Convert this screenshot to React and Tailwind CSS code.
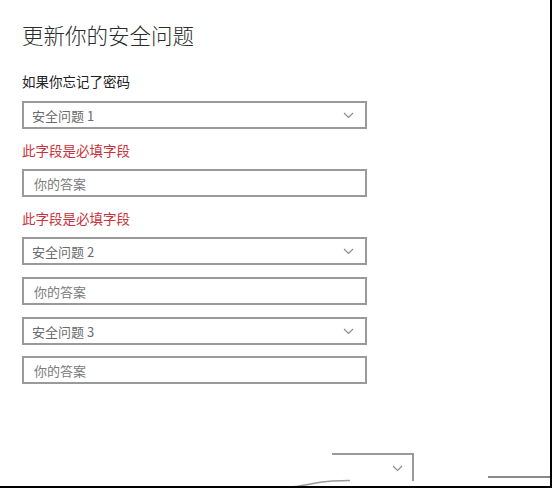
import React from "react";

const font = { fontFamily: '"Noto Sans CJK SC", "Noto Sans", sans-serif' };

function Chevron() {
  return (
    <svg width="11" height="7" viewBox="0 0 11 7" className="shrink-0">
      <path d="M1 1 L5.5 5.5 L10 1" fill="none" stroke="#8a8a8a" strokeWidth="1.1" />
    </svg>
  );
}

function Select({ label, className = "" }) {
  return (
    <div
      className={`flex items-center justify-between w-[345px] h-[28px] border-2 border-[#9a9a9a] bg-white pl-[8px] pr-[11px] ${className}`}
    >
      <span className="text-[13px] text-[#6b6b6b] leading-none">{label}</span>
      <Chevron />
    </div>
  );
}

function Answer({ className = "" }) {
  return (
    <div
      className={`flex items-center w-[345px] h-[28px] border-2 border-[#9a9a9a] bg-white pl-[10px] ${className}`}
    >
      <span className="text-[13px] text-[#7a7a7a] leading-none">你的答案</span>
    </div>
  );
}

function Required({ className = "" }) {
  return (
    <div className={`text-[13.5px] leading-[20px] text-[#c8323a] ${className}`}>
      此字段是必填字段
    </div>
  );
}

export default function App() {
  return (
    <div
      style={font}
      className="relative w-[552px] h-[488px] bg-white overflow-hidden border-r-2 border-b-2 border-black"
    >
      <div className="flex flex-col pl-[22px] pt-[21px]">
        <h1 className="text-[21.5px] leading-[28px] font-light text-[#2b2b2b]">
          更新你的安全问题
        </h1>
        <div className="mt-[22px] text-[13.5px] leading-[20px] text-[#222]">
          如果你忘记了密码
        </div>
        <Select label="安全问题 1" className="mt-[10px]" />
        <Required className="mt-[11px]" />
        <Answer className="mt-[9px]" />
        <Required className="mt-[11px]" />
        <Select label="安全问题 2" className="mt-[9px]" />
        <Answer className="mt-[12px]" />
        <Select label="安全问题 3" className="mt-[12px]" />
        <Answer className="mt-[11px]" />
      </div>

      {/* torn fragment at the bottom */}
      <div className="absolute left-[332px] top-[453px] w-[82px] h-[28px] border-t-2 border-r-2 border-[#9a9a9a] flex items-center justify-end pr-[9px]">
        <Chevron />
      </div>
      <svg className="absolute left-[290px] top-[476px]" width="60" height="12" viewBox="0 0 60 12">
        <path d="M0 11 C 15 10, 25 6, 42 5 L 60 4.5" fill="none" stroke="#9a9a9a" strokeWidth="1.5" />
      </svg>
      <div className="absolute left-[488px] top-[476px] w-[64px] h-[2px] bg-[#8a8a8a]" />
    </div>
  );
}
